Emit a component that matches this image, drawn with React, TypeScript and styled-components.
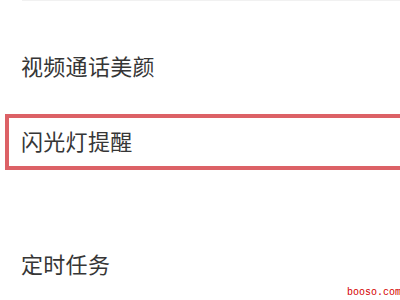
import React from 'react'
import styled, { createGlobalStyle } from 'styled-components'

const GlobalStyle = createGlobalStyle`
  html, body {
    margin: 0;
    padding: 0;
    background: #ffffff;
  }
  body {
    font-family: "Noto Sans CJK SC", "Noto Sans", sans-serif;
  }
`

const Page = styled.div`
  position: relative;
  width: 400px;
  height: 300px;
  overflow: hidden;
  background: #fff;
`

const Divider = styled.div`
  height: 1px;
  margin-left: 22px;
  background: #f1f1f1;
`

const List = styled.div`
  display: flex;
  flex-direction: column;
`

const Item = styled.div<{ top: number; highlighted?: boolean }>`
  margin-top: ${p => p.top}px;
  font-size: 22px;
  line-height: 22px;
  color: #363636;
  letter-spacing: 0.3px;
  padding: ${p => (p.highlighted ? '11px 0 15px 12px' : '0 0 0 21px')};
  margin-left: ${p => (p.highlighted ? '5px' : '0')};
  margin-right: ${p => (p.highlighted ? '-10px' : '0')};
  border: ${p => (p.highlighted ? '4px solid #dc6166' : 'none')};
`

const Watermark = styled.div`
  position: absolute;
  right: -1px;
  bottom: 2px;
  font-family: "Liberation Mono", monospace;
  font-size: 10px;
  line-height: 10px;
  color: #d40000;
`

export default function App() {
  return (
    <Page>
      <GlobalStyle />
      <Divider />
      <List>
        <Item top={53}>视频通话美颜</Item>
        <Item top={38} highlighted>
          闪光灯提醒
        </Item>
        <Item top={82}>定时任务</Item>
      </List>
      <Watermark>booso.com</Watermark>
    </Page>
  )
}
